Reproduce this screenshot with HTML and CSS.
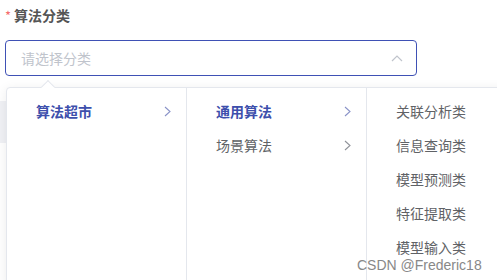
FILE: index.html
```html
<!DOCTYPE html>
<html lang="zh">
<head>
<meta charset="utf-8">
<link rel="stylesheet" href="styles.css">
</head>
<body>
<div class="form">
  <div class="label"><span class="star">*</span>算法分类</div>
  <div class="select-wrap">
    <div class="select">
      <span class="placeholder">请选择分类</span>
      <svg class="caret" width="12" height="8" viewBox="0 0 12 8"><path d="M1 7 L6 2 L11 7" fill="none" stroke="#c0c4cc" stroke-width="1.2"/></svg>
    </div>
    <div class="dropdown">
      <ul class="col">
        <li class="item active">算法超市<svg class="chev" width="7" height="11" viewBox="0 0 7 11"><path d="M1 1 L6 5.5 L1 10" fill="none" stroke="currentColor" stroke-width="1.1"/></svg></li>
      </ul>
      <ul class="col">
        <li class="item active">通用算法<svg class="chev" width="7" height="11" viewBox="0 0 7 11"><path d="M1 1 L6 5.5 L1 10" fill="none" stroke="currentColor" stroke-width="1.1"/></svg></li>
        <li class="item">场景算法<svg class="chev" width="7" height="11" viewBox="0 0 7 11"><path d="M1 1 L6 5.5 L1 10" fill="none" stroke="currentColor" stroke-width="1.1"/></svg></li>
      </ul>
      <ul class="col">
        <li class="item">关联分析类</li>
        <li class="item">信息查询类</li>
        <li class="item">模型预测类</li>
        <li class="item">特征提取类</li>
        <li class="item">模型输入类</li>
      </ul>
    </div>
  </div>
  <div class="table-head"></div>
</div>
<div class="watermark">CSDN @Frederic18</div>
</body>
</html>
```
FILE: styles.css
```css
html, body {
  margin: 0;
  padding: 0;
  background: #fff;
  overflow: hidden;
  width: 497px;
  height: 280px;
  font-family: "Noto Sans CJK SC", "Noto Sans", sans-serif;
}
.form {
  position: relative;
  height: 280px;
}
.label {
  padding: 5px 0 0 5px;
  height: 20px;
  line-height: 20px;
  font-size: 14px;
  font-weight: bold;
  color: #555;
}
.star {
  color: #f56c6c;
  font-weight: normal;
  font-size: 13px;
  margin-right: 3px;
}
.select-wrap {
  position: relative;
  margin: 15px 0 0 5px;
  width: 412px;
  z-index: 2;
}
.select {
  height: 34px;
  border: 1px solid #3f51b5;
  border-radius: 4px;
  display: flex;
  align-items: center;
  justify-content: space-between;
  padding: 0 13px 0 15px;
}
.placeholder {
  font-size: 14px;
  color: #c0c4cc;
}
.caret {
  display: block;
}
.dropdown {
  position: absolute;
  top: 47px;
  left: 1px;
  display: flex;
  background: #fff;
  border: 1px solid #e4e7ed;
  border-radius: 4px;
  box-shadow: 0 2px 12px rgba(0, 0, 0, 0.08);
  height: 200px;
}
.dropdown::before {
  content: "";
  position: absolute;
  top: -6px;
  left: 36px;
  width: 9px;
  height: 9px;
  background: #fff;
  border-left: 1px solid #e4e7ed;
  border-top: 1px solid #e4e7ed;
  transform: rotate(45deg);
}
.col {
  list-style: none;
  margin: 0;
  padding: 6px 0;
  width: 179px;
  border-right: 1px solid #e4e7ed;
}
.item {
  height: 34px;
  display: flex;
  align-items: center;
  justify-content: space-between;
  padding: 0 15px 0 29px;
  font-size: 14px;
  color: #606266;
}
.item.active {
  color: #3d4fac;
  font-weight: bold;
}
.chev {
  color: #8a93c8;
}
.item:not(.active) .chev {
  color: #909399;
}
.table-head {
  position: absolute;
  top: 101px;
  left: 0;
  width: 497px;
  height: 42px;
  background: #f0f1f5;
  z-index: 1;
}
.watermark {
  position: absolute;
  left: 357px;
  top: 257px;
  font-family: "Liberation Sans", sans-serif;
  font-size: 14px;
  color: #888;
  z-index: 5;
}
```
